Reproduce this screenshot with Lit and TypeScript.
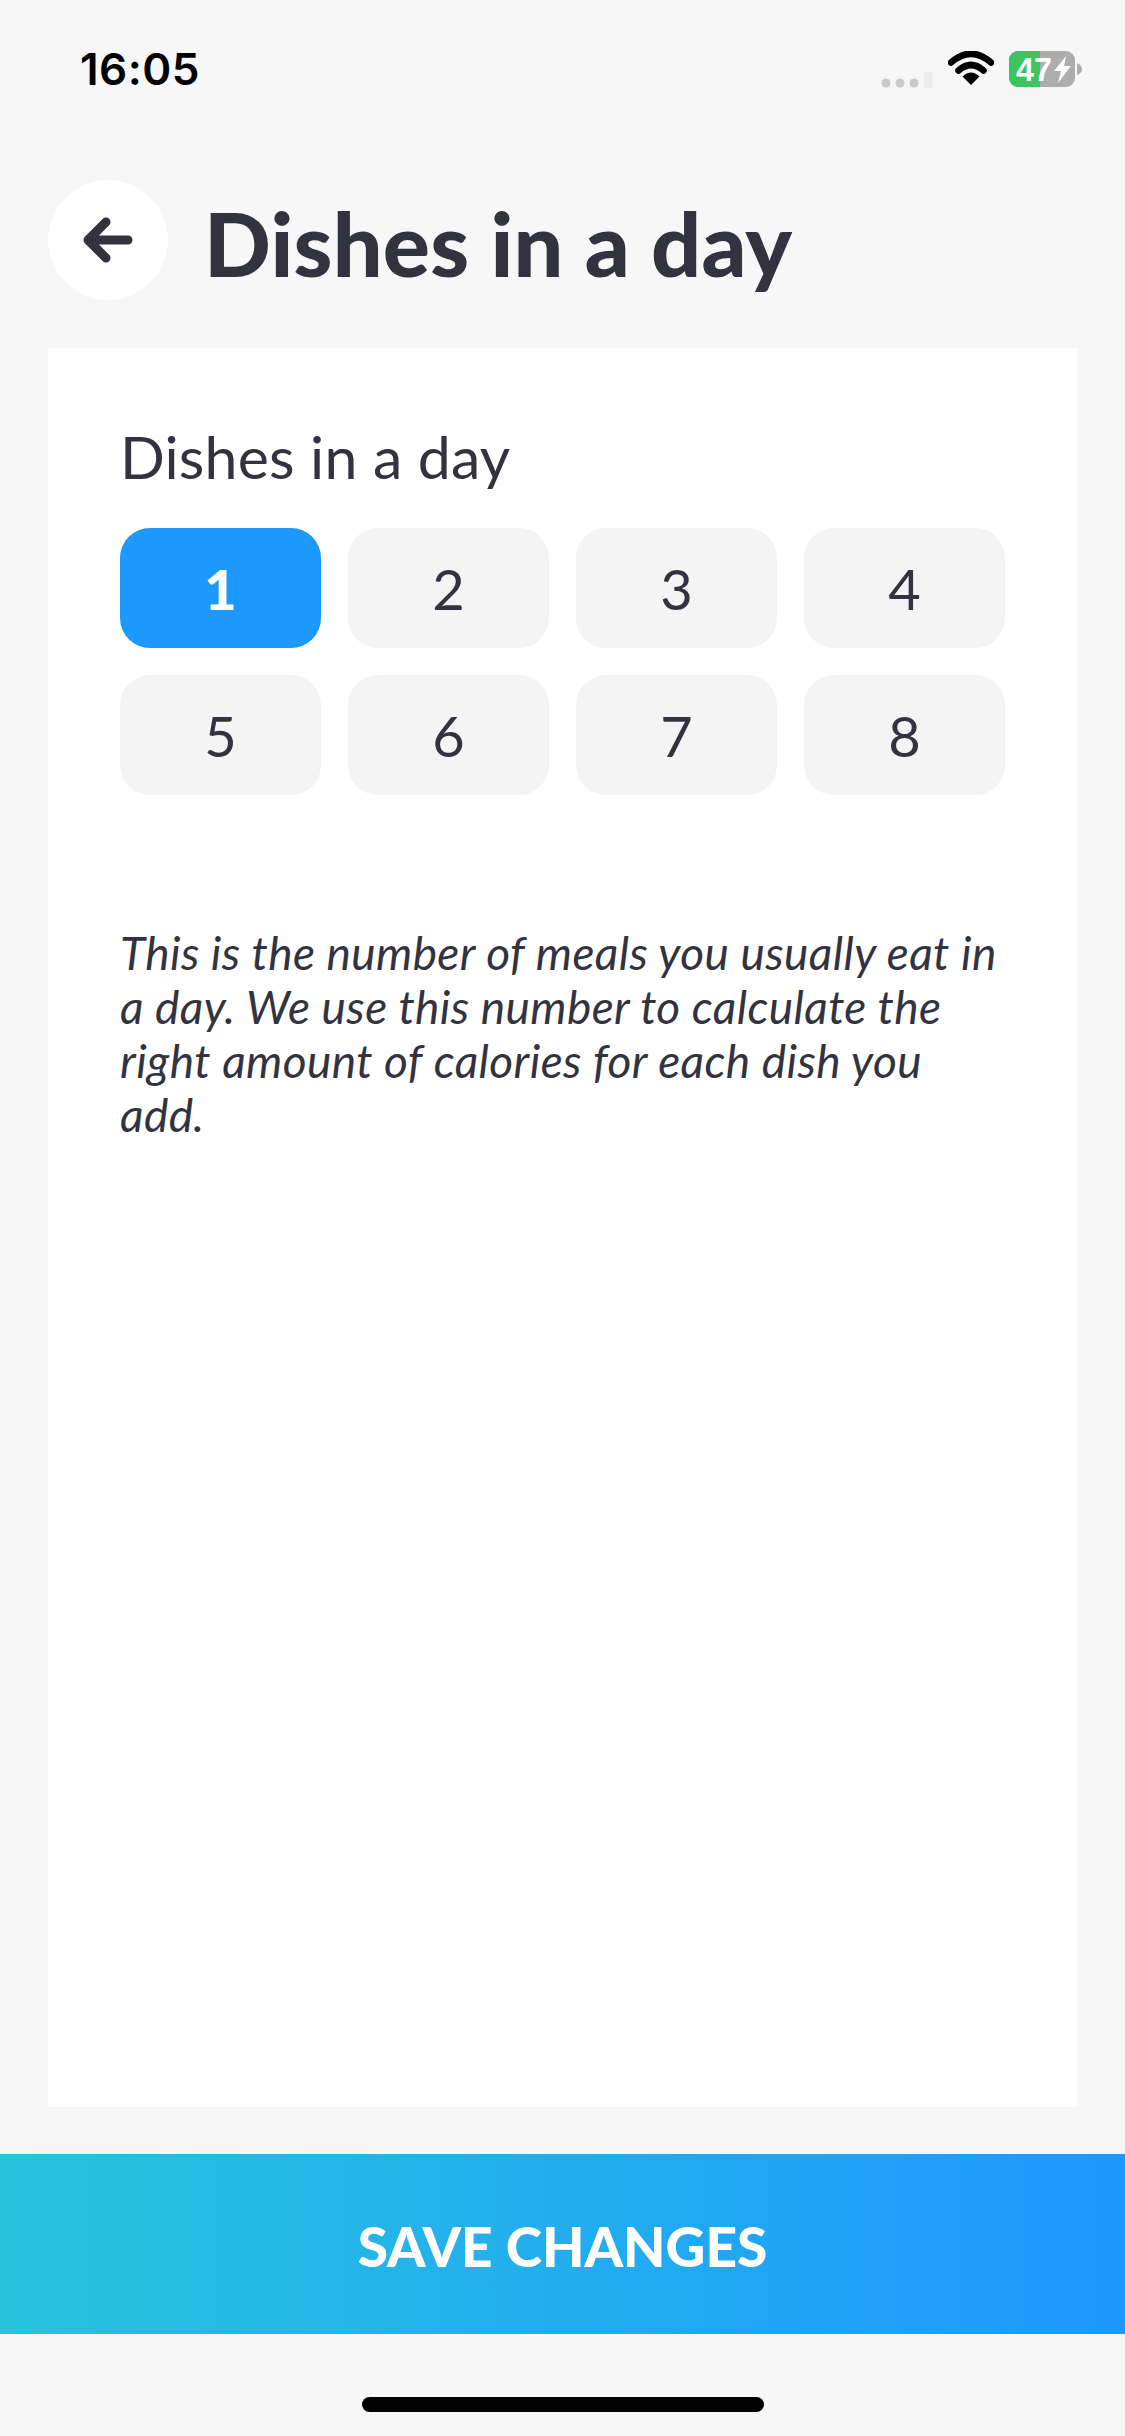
import { LitElement, html, css } from 'lit';
import { customElement, state } from 'lit/decorators.js';

@customElement('app-root')
export class AppRoot extends LitElement {
  @state() private selected = 1;

  static styles = css`
    :host {
      display: block;
      width: 1125px;
      height: 2436px;
      background: #f7f7f7;
      color: #32333f;
      font-family: Lato, "Noto Sans", sans-serif;
      overflow: hidden;
    }

    .page {
      display: flex;
      flex-direction: column;
      height: 2436px;
    }

    .status {
      display: flex;
      align-items: flex-start;
      justify-content: space-between;
      height: 180px;
      padding: 43px 42px 0 80px;
      box-sizing: border-box;
    }

    .time {
      font-family: Inter, "Liberation Sans", sans-serif;
      font-size: 44px;
      line-height: 52px;
      font-weight: 600;
      letter-spacing: 0.5px;
      color: #000;
    }

    .indicators {
      display: flex;
      align-items: flex-start;
      padding-top: 8px;
    }

    .signal {
      display: block;
      margin: 12px 15px 0 0;
    }

    .wifi {
      display: block;
      margin-right: 15px;
    }

    .battery {
      display: block;
    }

    .header {
      display: flex;
      align-items: center;
      gap: 36px;
      height: 120px;
      padding-left: 48px;
    }

    .back {
      display: flex;
      align-items: center;
      justify-content: center;
      width: 120px;
      height: 120px;
      padding: 0;
      border: none;
      border-radius: 50%;
      background: #fff;
    }

    .back svg {
      display: block;
    }

    h1 {
      margin: 6px 0 0;
      font-size: 88px;
      line-height: 100px;
      font-weight: 900;
      letter-spacing: 0.2px;
    }

    .card {
      flex: 1;
      margin: 48px 48px 47px;
      padding: 76px 72px 0;
      background: #fff;
    }

    .label {
      font-size: 59px;
      line-height: 66px;
      font-weight: 400;
      letter-spacing: 0.2px;
    }

    .grid {
      display: grid;
      grid-template-columns: repeat(4, 201px);
      grid-auto-rows: 120px;
      gap: 27px 27px;
      margin-top: 38px;
    }

    .chip {
      display: flex;
      align-items: center;
      justify-content: center;
      padding: 0;
      border: none;
      border-radius: 30px;
      background: #f4f4f4;
      color: #32333f;
      font-family: inherit;
      font-size: 56px;
      font-weight: 400;
    }

    .chip.on {
      background: #1c98ff;
      color: #fff;
      font-weight: 900;
    }

    .note {
      max-width: 880px;
      margin: 131px 0 0;
      font-size: 46px;
      line-height: 54px;
      font-style: italic;
      letter-spacing: 0.4px;
    }

    .save {
      display: flex;
      align-items: center;
      justify-content: center;
      height: 180px;
      flex: none;
      padding: 3px 0 0;
      border: none;
      background: linear-gradient(90deg, #28c3dd, #1c98ff);
      color: #fff;
      font-family: inherit;
      font-size: 55px;
      font-weight: 900;
    }

    .home {
      flex: none;
      height: 102px;
      display: flex;
      justify-content: center;
      padding-top: 63px;
      box-sizing: border-box;
    }

    .home span {
      display: block;
      width: 402px;
      height: 15px;
      border-radius: 8px;
      background: #000;
    }
  `;

  render() {
    const chips = [1, 2, 3, 4, 5, 6, 7, 8];
    return html`
      <div class="page">
        <div class="status">
          <span class="time">16:05</span>
          <div class="indicators">
            <svg class="signal" width="52" height="26" viewBox="0 0 52 26">
              <circle cx="5" cy="20" r="4.5" fill="#c9c9c9" />
              <circle cx="19" cy="20" r="4.5" fill="#c9c9c9" />
              <circle cx="33" cy="20" r="4.5" fill="#c9c9c9" />
              <rect x="43" y="9" width="9" height="16" rx="3" fill="#ececec" />
            </svg>
            <svg class="wifi" width="46" height="34" viewBox="0 0 46 34">
              <path d="M3 11.5 Q23 -6 43 11.5" fill="none" stroke="#000" stroke-width="6.5" stroke-linecap="round" />
              <path d="M10.5 19.5 Q23 8.5 35.5 19.5" fill="none" stroke="#000" stroke-width="6.5" stroke-linecap="round" />
              <path d="M14.5 25.5 Q23 17.5 31.5 25.5 L23 34 Z" fill="#000" />
            </svg>
            <svg class="battery" width="74" height="36" viewBox="0 0 74 36">
              <rect width="66" height="36" rx="9" fill="#adadad" />
              <path d="M9 0 H31 V36 H9 A9 9 0 0 1 0 27 V9 A9 9 0 0 1 9 0 Z" fill="#3cc55f" />
              <path d="M68 12 Q73 14 73 18 Q73 22 68 24 Z" fill="#adadad" />
              <text x="7" y="30" font-family="Liberation Sans, sans-serif" font-size="33" font-weight="700" fill="#fff" textLength="36" lengthAdjust="spacingAndGlyphs">47</text>
              <path d="M57 5 L45 20 H52 L49 32 L62 15 H55 Z" fill="#fff" />
            </svg>
          </div>
        </div>

        <div class="header">
          <button class="back" aria-label="Back">
            <svg width="50" height="46" viewBox="0 0 50 46">
              <path d="M23 5 L5 23 L23 41 M5 23 H45" fill="none" stroke="#32333f" stroke-width="9" stroke-linecap="round" stroke-linejoin="round" />
            </svg>
          </button>
          <h1>Dishes in a day</h1>
        </div>

        <div class="card">
          <div class="label">Dishes in a day</div>
          <div class="grid">
            ${chips.map(
              (n) => html`<button class="chip ${n === this.selected ? 'on' : ''}" @click=${() => (this.selected = n)}>${n}</button>`
            )}
          </div>
          <p class="note">
            This is the number of meals you usually eat in a day. We use this number to calculate the right amount of calories for each dish you add.
          </p>
        </div>

        <button class="save">SAVE CHANGES</button>
        <div class="home"><span></span></div>
      </div>
    `;
  }
}
